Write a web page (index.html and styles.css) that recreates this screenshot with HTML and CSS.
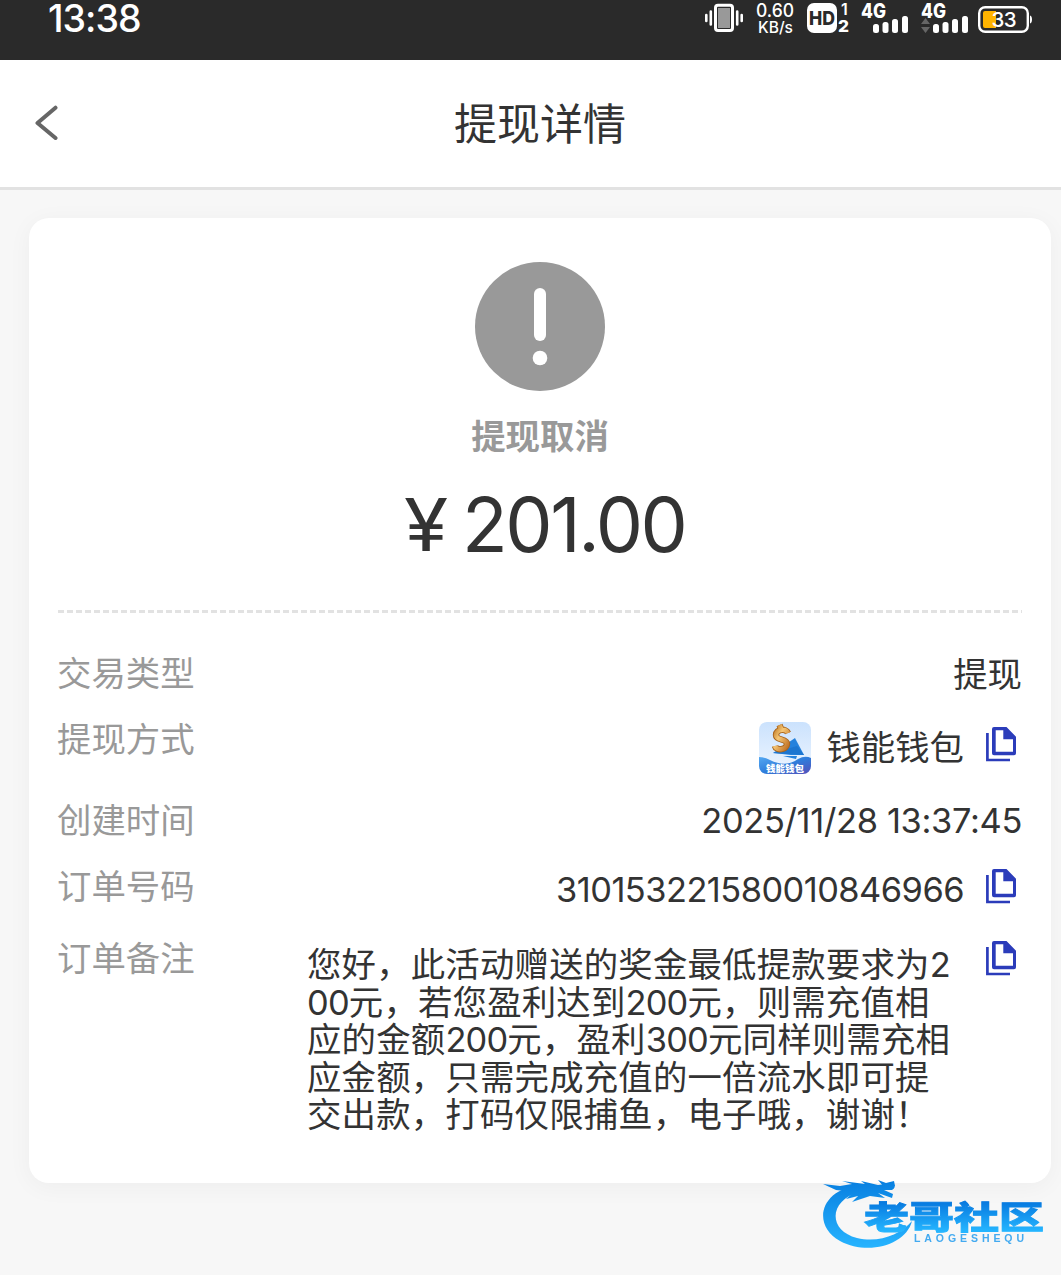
FILE: index.html
```
<!DOCTYPE html>
<html lang="zh-CN">
<head>
<meta charset="utf-8">
<title>提现详情</title>
<link rel="stylesheet" href="styles.css">
</head>
<body>
<svg class="defs" width="0" height="0" aria-hidden="true">
  <symbol id="copy" viewBox="0 0 30 35">
    <path d="M1.4 6V33H24" fill="none" stroke="#2b3cba" stroke-width="2.7"/>
    <path fill-rule="evenodd" d="M8 0H20.5L30 9.7V26.3Q30 28.3 28 28.3H8Q6 28.3 6 26.3V2Q6 0 8 0ZM9.7 3.3V24.8H27V12.3H17.3V3.3Z" fill="#2b3cba"/>
  </symbol>
</svg>
<header class="status">
  <span class="clock">13:38</span>
  <svg class="status-icons" width="361" height="60" viewBox="700 0 361 60" fill="#fff">
    <g fill="none" stroke="#fff" stroke-width="2.6" stroke-linecap="round">
      <rect x="715.5" y="5.3" width="17" height="25.2" rx="2.5" stroke-width="3"/>
      <path d="M706.3 15V21M710.8 11.5V24.5M737.2 11.5V24.5M741.7 15V21"/>
    </g>
    <rect x="718" y="8" width="12" height="20" fill="#999"/>
    <text class="s-text" x="756" y="17" font-size="18.5" textLength="38" lengthAdjust="spacingAndGlyphs">0.60</text>
    <text class="s-text" x="758" y="33" font-size="15.5" textLength="35" lengthAdjust="spacingAndGlyphs">KB/s</text>
    <rect x="807" y="3" width="30" height="30" rx="7"/>
    <text class="s-bold" x="809" y="25" font-size="19" fill="#2a2a2a" textLength="26" lengthAdjust="spacingAndGlyphs">HD</text>
    <text class="s-bold one" x="841" y="15" font-size="16">1</text>
    <text class="s-bold" x="838" y="32" font-size="16" textLength="11" lengthAdjust="spacingAndGlyphs">2</text>
    <text class="s-bold" x="861" y="17.5" font-size="19.5" textLength="25" lengthAdjust="spacingAndGlyphs">4G</text>
    <text class="s-bold" x="921" y="17.5" font-size="19.5" textLength="25" lengthAdjust="spacingAndGlyphs">4G</text>
    <g id="bars">
      <rect x="873" y="24" width="6" height="9" rx="2.5"/><rect x="882.5" y="22" width="6" height="11" rx="2.5"/><rect x="892" y="19" width="6" height="14" rx="2.5"/><rect x="902" y="16" width="6" height="17" rx="2.5"/>
    </g>
    <use href="#bars" x="60"/>
    <path d="M921 24L925.5 18L930 24ZM921 27L925.5 33L930 27Z" fill="#666"/>
    <rect x="979.2" y="7.2" width="48.6" height="24.6" rx="6" fill="none" stroke="#fff" stroke-width="2.4"/>
    <path d="M1030 15.5Q1032 16 1032 19.5T1030 23.5Z"/>
    <path d="M985 11H996V28H985Q983 28 983 26V13Q983 11 985 11Z" fill="#ffb400"/>
    <text class="s-text" x="991.5" y="27" font-size="20.5" textLength="25">33</text>
  </svg>
</header>
<nav class="navbar">
  <svg class="back" width="24" height="38" viewBox="0 0 24 38"><path d="M21.5 2.7L3.5 18L21.5 33" fill="none" stroke="#666" stroke-width="4" stroke-linecap="round" stroke-linejoin="round"/></svg>
  <h1 class="title">提现详情</h1>
</nav>
<main class="card">
  <section class="summary">
    <svg class="alert" width="130" height="130" viewBox="0 0 130 130"><ellipse cx="65" cy="64.5" rx="65" ry="64.5" fill="#999"/><rect x="59" y="26" width="12" height="53" rx="6" fill="#fff"/><circle cx="65" cy="96" r="7.3" fill="#fff"/></svg>
    <p class="state">提现取消</p>
    <p class="amount"><span class="yen">¥</span><span class="num">201.00</span></p>
  </section>
  <div class="divider"></div>
  <dl class="details">
    <div class="row row-type"><dt>交易类型</dt><dd>提现</dd></div>
    <div class="row row-method"><dt>提现方式</dt><dd>
      <svg class="wallet" width="52" height="52" viewBox="0 0 52 52">
        <defs>
          <linearGradient id="sky" x2="0" y2="1"><stop stop-color="#cbe2fd"/><stop offset="1" stop-color="#eef6ff"/></linearGradient>
          <linearGradient id="sea" x2="1" y2="1"><stop stop-color="#55a9f2"/><stop offset=".5" stop-color="#2f7ddb"/><stop offset="1" stop-color="#5650ba"/></linearGradient>
          <linearGradient id="gold" x2="1" y2="1"><stop stop-color="#bd7622"/><stop offset=".4" stop-color="#f6c776"/><stop offset="1" stop-color="#bd6c20"/></linearGradient>
          <clipPath id="tile"><rect width="52" height="52" rx="8"/></clipPath>
        </defs>
        <g clip-path="url(#tile)">
          <rect width="52" height="52" fill="url(#sky)"/>
          <path d="M14 31L36 16L45 33L32 33Z" fill="#2582dd"/>
          <path d="M14 31L38 24L45 33Z" fill="#1d76d0"/>
          <path d="M24 34H38L37 37Z" fill="#2582dd"/>
          <path d="M29 11C27 6 17 7 17 13C17 19 28 16 28 22C28 28 17 29 16 24M20.5 3L23 9M22 26L23 29" fill="none" stroke="#a8641d" stroke-width="6.4"/>
          <path d="M29 11C27 6 17 7 17 13C17 19 28 16 28 22C28 28 17 29 16 24M20.5 3L23 9" fill="none" stroke="url(#gold)" stroke-width="4.6"/>
          <path d="M0 35Q6 35 11 38Q27 46 39 37Q46 33 52 36V52H0Z" fill="url(#sea)"/>
          <text class="tile-text" x="7" y="49.8" font-size="9.5" textLength="38">钱能钱包</text>
        </g>
      </svg>
      <span class="wallet-name">钱能钱包</span>
      <svg class="copy" width="30" height="35"><use href="#copy"/></svg></dd></div>
    <div class="row row-time"><dt>创建时间</dt><dd><span class="time">2025/11/28 13:37:45</span></dd></div>
    <div class="row row-order"><dt>订单号码</dt><dd><span class="order">310153221580010846966</span><svg class="copy" width="30" height="35"><use href="#copy"/></svg></dd></div>
    <div class="row row-note"><dt>订单备注</dt><dd>
      <p class="note">您好，此活动赠送的奖金最低提款要求为<span class="n">2</span><br><span class="n">00</span>元，若您盈利达到<span class="n">200</span>元，则需充值相<br>应的金额<span class="n">200</span>元，盈利<span class="n">300</span>元同样则需充相<br>应金额，只需完成充值的一倍流水即可提<br>交出款，打码仅限捕鱼，电子哦，谢谢！</p>
      <svg class="copy" width="30" height="35"><use href="#copy"/></svg></dd></div>
  </dl>
</main>
<svg class="watermark" width="230" height="80" viewBox="820 1175 230 80">
  <defs><linearGradient id="blue" gradientUnits="userSpaceOnUse" x1="0" y1="1180" x2="0" y2="1248"><stop stop-color="#087fe0"/><stop offset="1" stop-color="#27b4ff"/></linearGradient>
  <linearGradient id="word" gradientUnits="userSpaceOnUse" x1="0" y1="-31" x2="0" y2="3"><stop stop-color="#0678df"/><stop offset="1" stop-color="#25b5ff"/></linearGradient></defs>
  <g fill="url(#blue)">
    <path d="M862 1185C820 1188 811 1225 840 1241C868 1256 906 1245 912 1221C900 1235 879 1243 857 1238C828 1231 828 1200 860 1192Z"/>
    <path d="M823 1184L840 1186L852 1184L842 1181L865 1184L861 1181L878 1185L893 1183Q897 1187 892 1190L884 1190L893 1194L892 1198L878 1193L885 1198L870 1196L852 1202L858 1196L846 1199L854 1192L836 1190Z"/>
    <path d="M878 1180L886 1183L894 1181L895 1186L884 1187Z"/>
  </g>
  <text class="brand" fill="url(#word)" stroke="url(#word)" stroke-width="1" transform="translate(864 1228.5) scale(1.25 .87)" font-size="36" textLength="144">老哥社区</text>
  <text class="brand-en" x="914" y="1241.5" font-size="10.5" fill="#43aaf0" textLength="110">LAOGESHEQU</text>
</svg>
</body>
</html>
```
FILE: styles.css
```
* { box-sizing: border-box; margin: 0; padding: 0; }
body {
  position: relative;
  width: 1061px;
  height: 1275px;
  overflow: hidden;
  background: #f7f7f7;
  color: #333;
  font-family: Inter, "Noto Sans CJK SC", sans-serif;
}
svg { display: block; flex: none; }
.defs { position: absolute; }
.status {
  display: flex;
  justify-content: space-between;
  height: 60px;
  padding-left: 48px;
  background: #2a2a2a;
  color: #fff;
}
.clock { font-size: 37.5px; line-height: 37px; font-weight: 500; letter-spacing: -1px; }
.s-text { font-family: Inter, sans-serif; font-weight: 500; }
.s-bold { font-family: Inter, sans-serif; font-weight: 800; }
.one { font-weight: 600; }
.navbar {
  display: flex;
  align-items: center;
  height: 130px;
  padding-left: 34px;
  background: #fff;
  border-bottom: 3px solid #e2e2e2;
}
.title {
  width: 172px;
  margin-left: 396px;
  font-size: 43px;
  font-weight: 400;
  line-height: 60px;
  white-space: nowrap;
}
.card {
  width: 1022px;
  height: 965px;
  margin: 28px 0 0 29px;
  padding: 44px 29px 0;
  border-radius: 20px;
  background: #fff;
  box-shadow: 0 4px 24px rgba(0, 0, 0, .045);
}
.summary { display: flex; flex-direction: column; align-items: center; height: 348px; }
.state { margin-top: 20px; font-size: 34.4px; line-height: 50px; font-weight: 700; color: #999; }
.amount { display: flex; align-items: center; align-self: flex-start; margin: 18px 0 0 346px; height: 90px; font-size: 75px; line-height: 90px; }
.yen { width: 58px; font-size: 73px; transform: scaleX(1.1); transform-origin: 0 50%; }
.num { letter-spacing: -2.4px; }
.divider { height: 3px; background: repeating-linear-gradient(90deg, #e2e2e2 0 6px, transparent 6px 9px); }
.details { padding-top: 28px; font-size: 34.4px; }
.row { display: flex; justify-content: space-between; }
.row dt { margin-left: -1px; color: #999; line-height: 66px; }
.row dd { display: flex; line-height: 66px; }
.row-type { height: 66px; }
.row-type dd { padding-top: 1px; }
.row-method { height: 81px; }
.row-time { height: 66px; }
.row-order { height: 72px; }
.wallet { margin: 15px 15px 0 0; }
.wallet-name { padding-top: 8px; }
.copy { margin: 20px 6px 0 22px; }
.time { letter-spacing: -.33px; }
.order { letter-spacing: -.53px; }
.row-order .copy { margin-top: 15px; }
.row-order .order { padding-top: 3px; }
.row-note .copy { margin: 15px 6px 0 0; }
.note { width: 679px; padding-top: 20px; line-height: 37.5px; letter-spacing: .2px; white-space: nowrap; }
.n { letter-spacing: -.8px; }
.tile-text { font-family: "Noto Sans CJK SC", sans-serif; font-weight: 900; fill: #fff; }
.watermark { position: absolute; left: 820px; top: 1175px; filter: blur(.6px); }
.brand { font-family: "Noto Sans CJK SC", sans-serif; font-weight: 900; }
.brand-en { font-family: "Liberation Sans", sans-serif; font-weight: 700; }
```
